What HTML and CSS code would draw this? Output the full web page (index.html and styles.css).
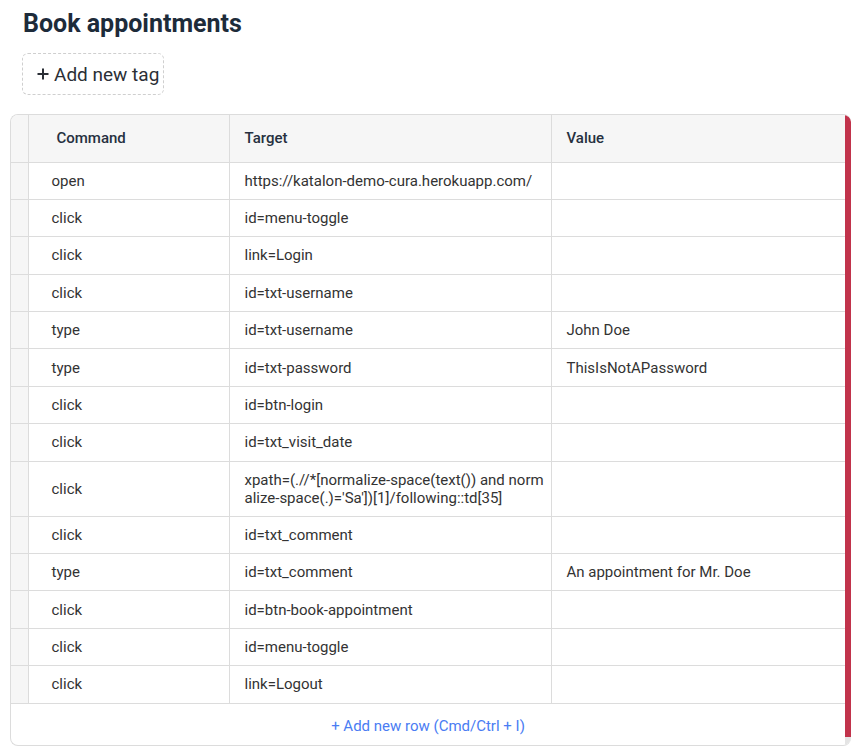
FILE: index.html
```html
<!DOCTYPE html>
<html>
<head>
<meta charset="utf-8">
<link rel="stylesheet" href="styles.css">
</head>
<body>
<h1 class="title">Book appointments</h1>
<button class="tag-btn">
  <svg class="plus" width="12" height="12" viewBox="0 0 12 12"><path d="M6 0.5V11.5M0.5 6H11.5" stroke="#2b2f36" stroke-width="2" fill="none"/></svg>
  <span>Add new tag</span>
</button>
<div class="grid-box">
  <div class="grid-main">
    <table class="steps">
      <colgroup>
        <col class="c-gut"><col class="c-cmd"><col class="c-tgt"><col class="c-val">
      </colgroup>
      <thead>
        <tr><th class="gut"></th><th class="cmd">Command</th><th>Target</th><th>Value</th></tr>
      </thead>
      <tbody>
        <tr><td class="gut"></td><td class="cmd">open</td><td>https://katalon-demo-cura.herokuapp.com/</td><td></td></tr>
        <tr><td class="gut"></td><td class="cmd">click</td><td>id=menu-toggle</td><td></td></tr>
        <tr><td class="gut"></td><td class="cmd">click</td><td>link=Login</td><td></td></tr>
        <tr><td class="gut"></td><td class="cmd">click</td><td>id=txt-username</td><td></td></tr>
        <tr><td class="gut"></td><td class="cmd">type</td><td>id=txt-username</td><td>John Doe</td></tr>
        <tr><td class="gut"></td><td class="cmd">type</td><td>id=txt-password</td><td>ThisIsNotAPassword</td></tr>
        <tr><td class="gut"></td><td class="cmd">click</td><td>id=btn-login</td><td></td></tr>
        <tr><td class="gut"></td><td class="cmd">click</td><td>id=txt_visit_date</td><td></td></tr>
        <tr><td class="gut"></td><td class="cmd">click</td><td class="wrap">xpath=(.//*[normalize-space(text()) and normalize-space(.)='Sa'])[1]/following::td[35]</td><td></td></tr>
        <tr><td class="gut"></td><td class="cmd">click</td><td>id=txt_comment</td><td></td></tr>
        <tr><td class="gut"></td><td class="cmd">type</td><td>id=txt_comment</td><td>An appointment for Mr. Doe</td></tr>
        <tr><td class="gut"></td><td class="cmd">click</td><td>id=btn-book-appointment</td><td></td></tr>
        <tr><td class="gut"></td><td class="cmd">click</td><td>id=menu-toggle</td><td></td></tr>
        <tr><td class="gut"></td><td class="cmd">click</td><td>link=Logout</td><td></td></tr>
      </tbody>
    </table>
    <div class="add-row">+ Add new row (Cmd/Ctrl + I)</div>
  </div>
  <div class="scroll">
    <div class="thumb"></div>
    <div class="track-end"></div>
  </div>
</div>
</body>
</html>
```

FILE: styles.css
```css
* { box-sizing: border-box; }
html, body { background: #fff; }
body {
  margin: 0;
  padding: 0 9px 6px 10px;
  font-family: Roboto, "Liberation Sans", Arial, sans-serif;
  color: #333;
}
.title {
  margin: 0 0 13px 13px;
  padding-top: 8px;
  font-size: 25px;
  line-height: 32px;
  font-weight: 700;
  color: #1d2b3a;
}
.tag-btn {
  margin-left: 12px;
  height: 42px;
  width: 142px;
  padding: 0 0 0 14px;
  display: flex;
  align-items: center;
  gap: 5px;
  background: #fff;
  border: 1px dashed #cfcfcf;
  border-radius: 6px;
  font-family: Roboto, "Liberation Sans", Arial, sans-serif;
  font-size: 19px;
  color: #2b2f36;
}
.plus { flex: none; }
.grid-box {
  margin-top: 19px;
  width: 841px;
  height: 632px;
  display: flex;
  border: 1px solid #dcdcdc;
  border-right: none;
  border-radius: 8px;
  overflow: hidden;
}
.grid-main {
  flex: 1;
  display: flex;
  flex-direction: column;
  min-width: 0;
}
.steps {
  width: 835px;
  border-collapse: collapse;
  table-layout: fixed;
  font-size: 15px;
  line-height: 18px;
}
.c-gut { width: 17px; }
.c-cmd { width: 201px; }
.c-tgt { width: 322px; }
.c-val { width: 295px; }
.steps th {
  height: 47px;
  background: #f6f6f6;
  text-align: left;
  font-weight: 500;
  color: #263040;
  padding: 0 15px;
  border-right: 1px solid #dcdcdc;
  border-bottom: 1px solid #dcdcdc;
}
.steps th.cmd { padding-left: 28px; }
.steps th:last-child, .steps td:last-child { border-right: none; }
.steps td {
  height: 37.4px;
  padding: 9px 15px;
  vertical-align: middle;
  border-right: 1px solid #dcdcdc;
  border-bottom: 1px solid #dcdcdc;
  color: #333;
}
.steps td.cmd { padding-left: 23px; }
.steps .gut { background: #f6f6f6; padding: 0; }
.steps td.wrap { word-break: break-all; padding-right: 6px; }
.add-row {
  flex: 1;
  display: flex;
  align-items: center;
  justify-content: center;
  padding-top: 4px;
  font-size: 15px;
  color: #4a7cf3;
}
.scroll {
  width: 6px;
  display: flex;
  flex-direction: column;
}
.thumb { flex: 1; background: #c1334b; }
.track-end { height: 8px; background: #e4e4e4; }
```
